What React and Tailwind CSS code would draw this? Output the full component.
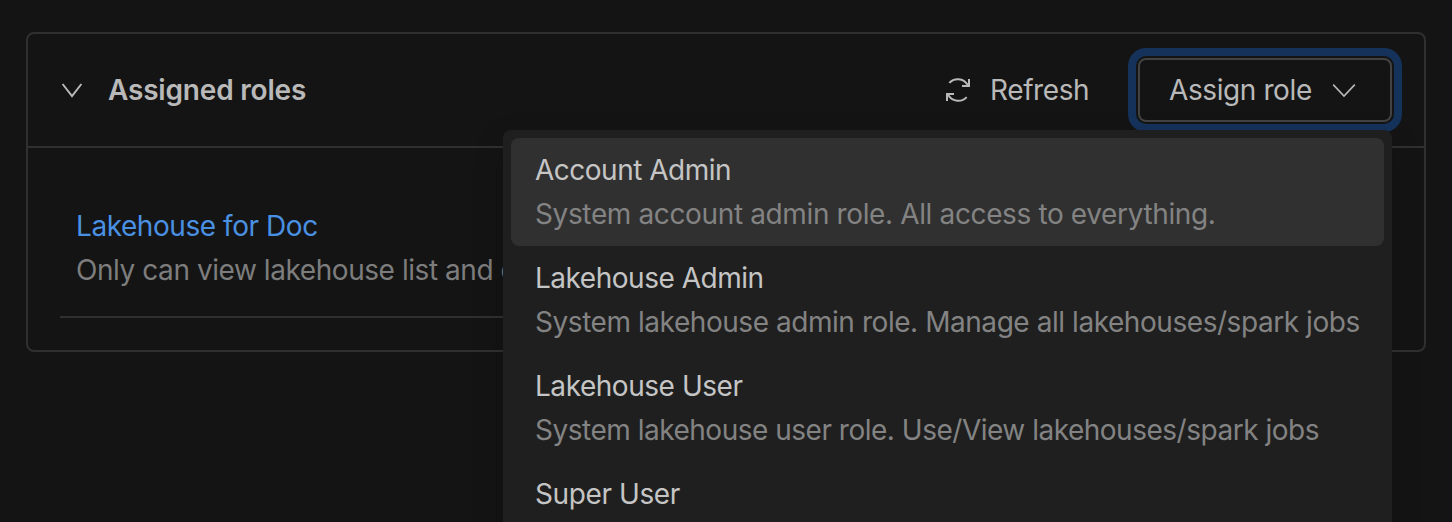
const roles = [
  { name: 'Account Admin', description: 'System account admin role. All access to everything.', nameSpacing: 'tracking-[-0.5px]', spacing: 'tracking-[-0.37px]' },
  { name: 'Lakehouse Admin', description: 'System lakehouse admin role. Manage all lakehouses/spark jobs', nameSpacing: 'tracking-[-0.48px]', spacing: 'tracking-[-0.445px]' },
  { name: 'Lakehouse User', description: 'System lakehouse user role. Use/View lakehouses/spark jobs', nameSpacing: 'tracking-[-0.46px]', spacing: 'tracking-[-0.49px]' },
  { name: 'Super User', description: '', nameSpacing: 'tracking-[-0.4px]', spacing: '' },
];

function RefreshIcon() {
  return (
    <svg width="24" height="24" viewBox="0 0 24 24" fill="none" stroke="currentColor" strokeWidth="2">
      <path d="M3.3 4.9C8.2 -0.4 17.3 -0.2 21.8 7" />
      <path d="M23 1V8H16" />
      <path d="M20.7 19.1C15.8 24.4 6.7 24.2 2.2 17" />
      <path d="M1 23V16H8" />
    </svg>
  );
}

export default function App() {
  return (
    <div className="relative h-[522px] overflow-hidden bg-[#141414] px-[26px] pt-8 font-['Inter',sans-serif] text-[28px] font-[420] leading-[44px] tracking-[-0.44px] text-[#b9b9b9]">
      <section className="h-80 rounded-[8px] border-2 border-[#303030]">
        <header className="flex h-[114px] items-center border-b-2 border-[#303030] pl-8 pr-8">
          <svg width="24" height="24" viewBox="0 0 24 24" fill="none" stroke="currentColor" strokeWidth="1.9">
            <path d="M2.6 6L12 18.2L21.4 6" />
          </svg>
          <h2 className="ml-6 font-semibold tracking-[-0.19px]">Assigned roles</h2>
          <div className="ml-auto flex items-center">
            <button className="mr-[48px] flex items-center gap-[18px]">
              <RefreshIcon />
              <span className="w-[102px] pl-0.5 text-left tracking-[-0.4px]">Refresh</span>
            </button>
            <button className="flex h-16 w-[254px] items-center justify-between rounded-[8px] border-2 border-[#424242] pl-[29px] pr-[34px] outline-8 outline-offset-2 outline-[#15325b]">
              <span className="tracking-[-0.4px]">Assign role</span>
              <svg width="24" height="24" viewBox="0 0 24 24" fill="none" stroke="currentColor" strokeWidth="1.6">
                <path d="M1.2 6.6L12 18L22.8 6.6" />
              </svg>
            </button>
          </div>
        </header>
        <div className="mx-8 h-[170px] border-b-2 border-[#303030] px-4 pt-14">
          <a className="block w-fit text-[#4a90e2]">Lakehouse for Doc</a>
          <p className="whitespace-nowrap text-[#7d7d7d]">Only can view lakehouse list and details</p>
        </div>
      </section>
      <ul className="absolute left-[503px] top-[130px] w-[889px] rounded-[8px] bg-[#1f1f1f] p-2 shadow-[0_12px_32px_rgba(0,0,0,0.16)]">
        {roles.map((role, i) => (
          <li key={role.name} className={i === 0 ? 'h-[108px] rounded-[8px] bg-[#303030] px-6 py-[10px]' : 'h-[108px] px-6 py-[10px]'}>
            <p className={`w-fit whitespace-nowrap text-[#c5c5c5] ${role.nameSpacing}`}>{role.name}</p>
            {role.description && <p className={`w-fit whitespace-nowrap text-[#838383] ${role.spacing}`}>{role.description}</p>}
          </li>
        ))}
      </ul>
    </div>
  );
}
